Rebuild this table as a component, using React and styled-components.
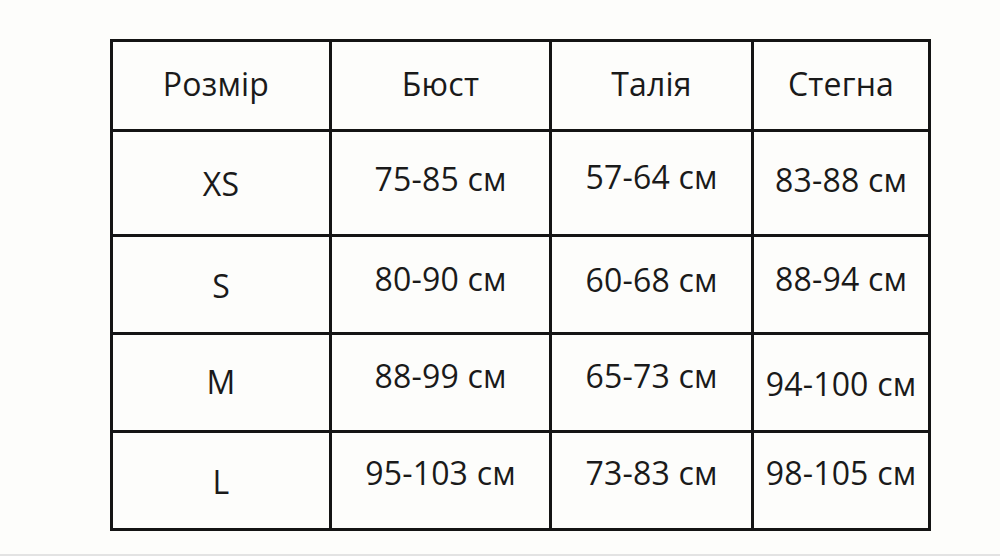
import React from "react";
import styled, { createGlobalStyle } from "styled-components";

const Global = createGlobalStyle`
  html, body, #root { margin: 0; padding: 0; height: 100%; }
  body {
    background: #fdfdfb;
    font-family: "Open Sans", "Noto Sans", "DejaVu Sans", sans-serif;
    color: #1a1a1a;
  }
`;

const Page = styled.div`
  height: 100%;
  display: flex;
  flex-direction: column;
  box-sizing: border-box;
  padding: 39px 0 0 110px;
`;

const Grid = styled.div`
  display: grid;
  grid-template-columns: 216px 217px 199px 174px;
  grid-template-rows: 87px 102px 95px 95px 95px;
  gap: 3px;
  padding: 3px;
  background: #141414;
  width: max-content;
`;

const Cell = styled.div`
  background: #fdfdfb;
  display: flex;
  align-items: center;
  justify-content: center;
  font-size: 32px;
  letter-spacing: 0.2px;
  line-height: 1;
  padding-top: ${(p) => (p.$shift > 0 ? p.$shift * 2 : 0)}px;
  padding-bottom: ${(p) => (p.$shift < 0 ? -p.$shift * 2 : 0)}px;
  padding-right: ${(p) => (p.$nudge ? p.$nudge * 2 : 0)}px;
`;

const Footer = styled.div`
  margin-top: auto;
  margin-left: -110px;
  height: 2px;
  background: #e3e3e3;
`;

const header = [["Розмір", 5], ["Бюст", 0], ["Талія", 0], ["Стегна", 0]];
const rows = [
  [["XS", 1], ["75-85 см", -4], ["57-64 см", -6], ["83-88 см", -3]],
  [["S", 1], ["80-90 см", -6], ["60-68 см", -5], ["88-94 см", -6]],
  [["M", -1], ["88-99 см", -7], ["65-73 см", -7], ["94-100 см", 1]],
  [["L", 1], ["95-103 см", -8], ["73-83 см", -8], ["98-105 см", -8]],
];

export default function App() {
  return (
    <>
      <Global />
      <Page>
        <Grid>
          {header.map(([h, n]) => (
            <Cell key={h} $shift={-2} $nudge={n}>{h}</Cell>
          ))}
          {rows.map((r, i) =>
            r.map(([t, s], j) => (
              <Cell key={`${i}-${j}`} $shift={s}>{t}</Cell>
            ))
          )}
        </Grid>
        <Footer />
      </Page>
    </>
  );
}
